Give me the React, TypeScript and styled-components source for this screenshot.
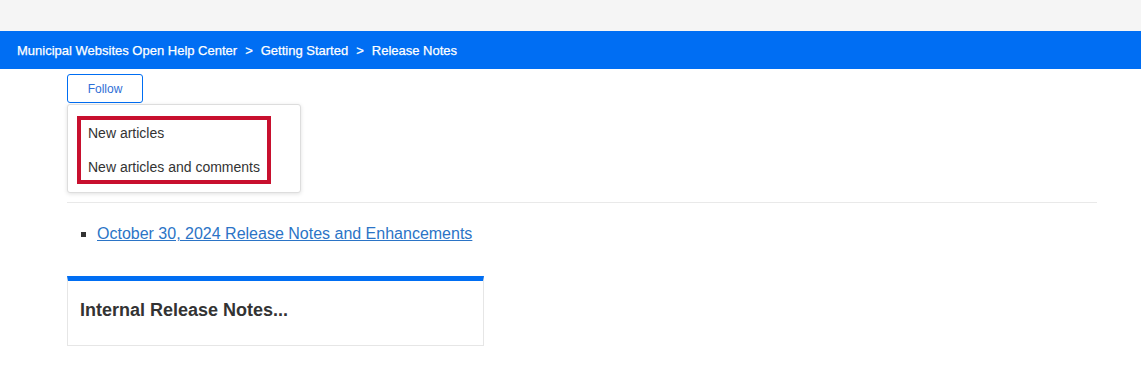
import React from "react";
import styled, { createGlobalStyle } from "styled-components";

const Global = createGlobalStyle`
  html, body { margin: 0; padding: 0; background: #fff; }
  body { font-family: "Liberation Sans", Arial, sans-serif; color: #333; }
`;

const TopStrip = styled.div`
  height: 31px;
  background: #f5f5f5;
`;

const BreadcrumbBar = styled.nav`
  height: 38px;
  background: #006ef3;
  display: flex;
  align-items: center;
  padding-left: 17px;
  color: #fff;
  font-size: 13px;
  font-weight: 400;
  -webkit-text-stroke: 0.25px #fff;
`;

const Crumb = styled.span``;

const Sep = styled.span`
  margin: 0 8px;
`;

const Main = styled.main`
  margin: 0 44px 0 67px;
`;

const FollowWrap = styled.div`
  position: relative;
  padding-top: 5px;
  height: 128px;
`;

const FollowButton = styled.button`
  width: 76px;
  height: 29px;
  border: 1px solid #006ef3;
  border-radius: 3px;
  background: #fff;
  color: #2f6fd6;
  font-family: inherit;
  font-size: 12px;
  padding: 0;
`;

const Menu = styled.ul`
  position: absolute;
  top: 35px;
  left: 0;
  width: 234px;
  height: 89px;
  margin: 0;
  padding: 11px 0 0 9px;
  box-sizing: border-box;
  list-style: none;
  background: #fff;
  border: 1px solid #ddd;
  border-radius: 3px;
  box-shadow: 0 1px 4px rgba(0, 0, 0, 0.12);
`;

const Highlight = styled.div`
  width: 194px;
  height: 68px;
  box-sizing: border-box;
  border: 4px solid #c8102e;
  padding: 4px 0 0 7px;
  display: flex;
  flex-direction: column;
  gap: 16px;
`;

const MenuItem = styled.li`
  font-size: 14px;
  color: #333;
  line-height: 18px;
`;

const Rule = styled.hr`
  margin: 0;
  border: none;
  border-top: 1px solid #e9e9e9;
`;

const List = styled.ul`
  margin: 20px 0 0;
  padding-left: 30px;
  list-style: square;
  font-size: 16px;
  line-height: 22px;
`;

const ListLink = styled.a`
  color: #2b74c6;
  text-decoration: underline;
`;

const Card = styled.section`
  margin-top: 31px;
  width: 417px;
  height: 70px;
  box-sizing: border-box;
  border: 1px solid #e6e6e6;
  border-top: 5px solid #006ef3;
  padding: 19px 0 0 12px;
`;

const CardTitle = styled.h2`
  margin: 0;
  font-size: 18px;
  font-weight: 700;
  color: #333;
`;

export default function App() {
  return (
    <>
      <Global />
      <TopStrip />
      <BreadcrumbBar>
        <Crumb>Municipal Websites Open Help Center</Crumb>
        <Sep>&gt;</Sep>
        <Crumb>Getting Started</Crumb>
        <Sep>&gt;</Sep>
        <Crumb>Release Notes</Crumb>
      </BreadcrumbBar>
      <Main>
        <FollowWrap>
          <FollowButton>Follow</FollowButton>
          <Menu>
            <Highlight>
              <MenuItem>New articles</MenuItem>
              <MenuItem>New articles and comments</MenuItem>
            </Highlight>
          </Menu>
        </FollowWrap>
        <Rule />
        <List>
          <li>
            <ListLink href="#">October 30, 2024 Release Notes and Enhancements</ListLink>
          </li>
        </List>
        <Card>
          <CardTitle>Internal Release Notes...</CardTitle>
        </Card>
      </Main>
    </>
  );
}
